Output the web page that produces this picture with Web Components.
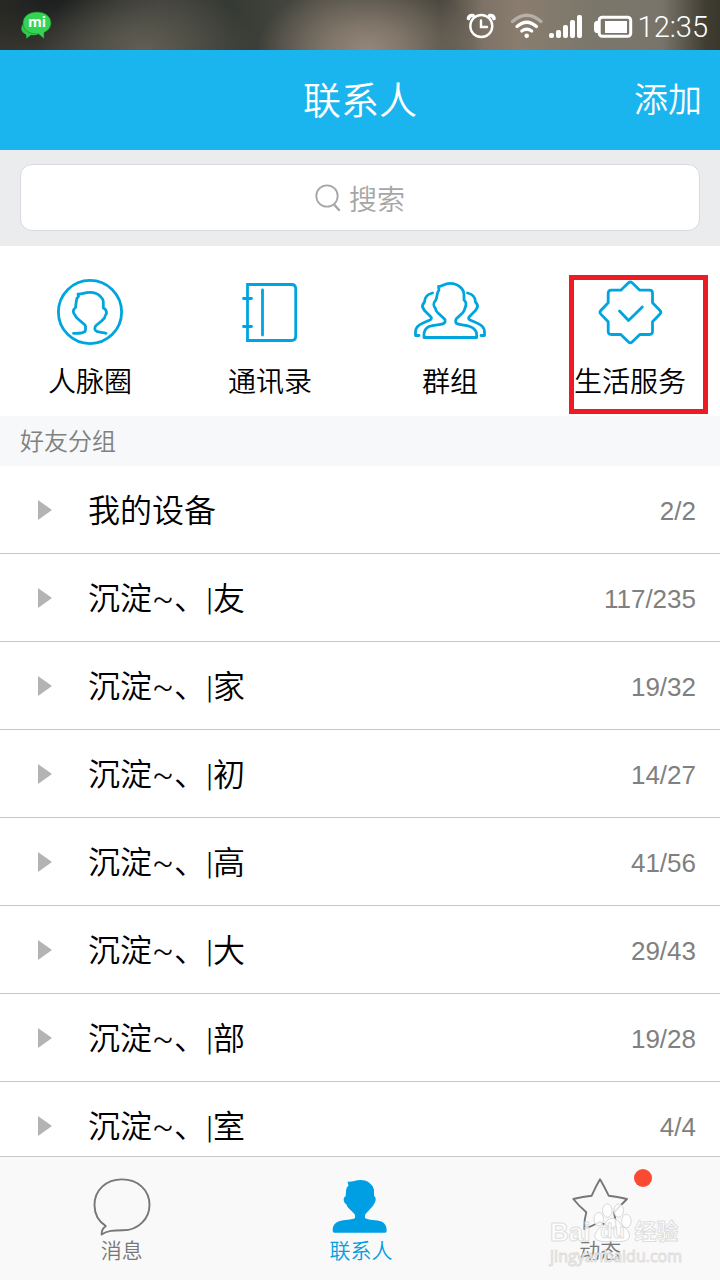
<!DOCTYPE html>
<html lang="zh-CN">
<head>
<meta charset="utf-8">
<meta name="viewport" content="width=device-width, initial-scale=1">
<title>联系人</title>
<style>
  body { margin: 0; font-family: "Noto Sans CJK SC", sans-serif; font-weight: 350; color: #000; background: #fff; }
</style>
</head>
<body>
<contacts-app></contacts-app>

<script>
function define(name, html) {
  const template = document.createElement('template');
  template.innerHTML = html;
  customElements.define(name, class extends HTMLElement {
    constructor() {
      super();
      this.attachShadow({ mode: 'open' }).append(template.content.cloneNode(true));
    }
  });
}

define('status-bar', `
<style>
  :host { display: flex; align-items: center; flex: none; height: 50px; padding: 0 12px 0 20px; color: #fff;
    background:
      radial-gradient(ellipse 110px 70px at 51% 100%, #94867a 0%, #8f8174cc 35%, #8f817400 100%),
      radial-gradient(ellipse 110px 70px at 20% 100%, #625f54 0%, #5c594e00 100%),
      radial-gradient(ellipse 110px 50px at 7% 0%, #1c1f1f 0%, #1c1f1f00 100%),
      linear-gradient(90deg, #34332b 0%, #3c3e38 18%, #363a34 32%, #4b4b43 45%, #47453c 61%, #7d7266 67%, #8a7d6f 72%, #7b776b 82%, #78746a 92%, #403d31 98%, #39362b 100%); }
  svg { display: block; flex: none; fill: none; stroke: #fff; }
  .space { flex: 1; }
  .alarm { margin-right: 14px; }
  .wifi { margin-right: 4px; }
  .signal { margin-right: 9px; }
  .battery { margin-right: 5px; }
  time { padding-top: 4px; font: 300 29px/30px Roboto, sans-serif; }
</style>
<svg width="32" height="30" viewBox="0 0 32 30" role="img" aria-label="米聊">
  <path d="M4 13C0 17 .5 22 6 24.5L6.500 28.500L11 25Q15 25.500 18 24.500Z" fill="#2fc94c" stroke="none"/>
  <path d="M17 2C25 2 31 6.500 31 13C31 17 28.500 20.500 24 22.500L24 28.500L18.500 24C9 24.500 3 20 3 13C3 6.500 9 2 17 2Z" fill="#34d453" stroke="#24762f" stroke-width=".6"/>
  <text x="17" y="17" text-anchor="middle" font-family="Open Sans" font-weight="700" font-size="14" fill="#fff" stroke="none">mi</text>
</svg>
<span class="space"></span>
<svg class="alarm" width="30" height="30" viewBox="0 0 30 30" stroke-width="2.400" stroke-linecap="round">
  <circle cx="15.300" cy="16" r="11"/><path d="M15 10.500V17H21"/>
  <path d="M2.500 8.500Q3 5 7 5.500M23.700 5.500Q27.500 5 28 8.500" stroke-width="3.600"/>
</svg>
<svg class="wifi" width="34" height="30" viewBox="0 0 34 30" stroke-width="3.200" stroke-linecap="round">
  <path d="M2.500 11.500Q16.700-1 31 11.500" opacity=".4"/>
  <path d="M7 16.500Q16.700 8 26.500 16.500M11.800 21Q16.700 17.500 21.700 21"/>
  <circle cx="16.700" cy="25.700" r="2.300" fill="#fff" stroke="none"/>
</svg>
<svg class="signal" width="36" height="30" viewBox="0 0 36 30" stroke="none">
  <g fill="#fff" stroke="none"><rect x="1" y="23" width="5" height="5" rx="2"/><rect x="8" y="20" width="5" height="8" rx="2"/><rect x="15" y="15" width="5" height="13" rx="2"/><rect x="22" y="10" width="5" height="18" rx="2"/><rect x="29" y="5" width="5" height="23" rx="2"/></g>
</svg>
<svg class="battery" width="40" height="30" viewBox="0 0 40 30">
  <rect x="6.200" y="7.300" width="31.500" height="19" rx="3" stroke-width="3"/>
  <path d="M5 11H3Q1 12 1 14V20Q1 22 3 23H5Z" fill="#fff" stroke="none"/>
  <rect x="12" y="11" width="22" height="12" fill="#fff" stroke="none"/>
</svg>
<time>12:35</time>
`);

define('title-bar', `
<style>
  :host { display: grid; grid-template-columns: 1fr auto 1fr; align-items: center; flex: none; height: 100px; padding: 0 18px 4px; box-sizing: border-box; background: #1ab4ee; color: #fff; }
  h1 { grid-column: 2; margin: 0; font-size: 38px; line-height: 48px; font-weight: inherit; }
  button { justify-self: end; border: 0; padding: 0; background: none; color: inherit; font: inherit; font-size: 34px; line-height: 48px; }
</style>
<h1><slot></slot></h1>
<button type="button"><slot name="action"></slot></button>
`);

define('search-box', `
<style>
  :host { display: block; flex: none; padding: 14px 20px 15px; background: #ebeced; }
  label { display: flex; align-items: center; justify-content: center; gap: 8px; height: 65px; border: 1px solid #d8dadd; border-radius: 12px; background: #fff; }
  svg { flex: none; }
  input { width: 56px; height: 40px; box-sizing: border-box; padding: 0; margin: 0; border: 0; outline: 0; background: none; font: inherit; font-size: 28px; line-height: 40px; }
  input::placeholder { color: #a6a6a6; opacity: 1; }
</style>
<label>
  <svg width="26" height="28" viewBox="0 0 26 28" fill="none" stroke="#a6a6a6" stroke-linecap="round"><circle cx="12" cy="12" r="10.700" stroke-width="1.800"/><path d="M19.500 21L24 26" stroke-width="2.400"/></svg>
  <input type="text" placeholder="搜索" aria-label="搜索">
</label>
`);

define('quick-link', `
<style>
  :host { position: relative; display: block; flex: 1; }
  a { display: flex; flex-direction: column; align-items: center; gap: 12px; padding: 30px 0 16px; color: inherit; text-decoration: none; font-size: 28px; line-height: 40px; white-space: nowrap; }
  ::slotted(svg) { display: block; width: 72px; height: 72px; }
  .mark { display: none; position: absolute; inset: 29px 12px 2px 29px; border: 5px solid #ed1c24; }
  :host([marked]) .mark { display: block; }
</style>
<a href="#"><slot name="icon"></slot><span><slot></slot></span></a>
<div class="mark"></div>
`);

define('quick-links', `
<style>
  :host { display: flex; flex: none; background: #fff; }
  svg { fill: none; stroke: #00a5e0; stroke-width: 2.800; stroke-linecap: round; stroke-linejoin: round; }
</style>
<quick-link>
  <svg slot="icon" viewBox="0 0 72 72"><circle cx="36" cy="36" r="31.600"/><path d="M19.500 57.300C26 57.500 31.500 57 31.500 54V50L30.500 48.500L24 43Q21.500 41 21 39Q19.500 38 19.300 35.500Q19.500 33 21.500 31.500L22.500 24Q22.700 22 24.500 20.500L24 18C28 18.500 30 16.300 36 16.300Q43 16.300 46.500 20.500Q49.300 23 49.300 26V32C51.500 33 52.800 35.500 52.300 38Q51 39 50.500 42L47.500 45L42 49.500Q40.800 50.500 40.800 53C41 56 45 56 52 57.300"/></svg>人脉圈
</quick-link>
<quick-link>
  <svg slot="icon" viewBox="0 0 72 72"><path d="M13.500 8.500H57.500Q61.700 8.500 61.700 13V60Q61.700 64.500 57.500 64.500H13.500Z" stroke-linejoin="miter"/><path d="M28.500 14V59M9.500 22.500H17.500M9.500 50.500H17.500"/></svg>通讯录
</quick-link>
<quick-link>
  <svg slot="icon" viewBox="0 0 72 72"><path d="M25 14L24.500 10.500C28 11 30 7.300 36 7.300C44 7.300 50 13 50 19V24C52.500 26 52.500 29 51 32Q50.500 35 48.500 37L42.500 42.500Q41.500 44 41.700 46C42 49.500 50 48 56 50.500Q62.700 53 62.700 59V61.500H10V59Q10 53 15 50.500C22 48 31 49.500 31 45.500V43.500L24 37Q21.500 35 21.500 32.500C19.500 30.500 19 27 21.500 24.500C24 20 22 18 25 14Z"/><path d="M18.500 17C12 18.500 10.500 22 10.500 26Q8 29 8.500 31L10.500 34.500L17 41Q18 43 16 44L9 47Q1.500 50 1.500 56V59.500H5M53.500 17C60 18.500 61.500 22 61.500 26Q64 29 63.500 31L61.500 34.500L55 41Q54 43 56 44L63 47Q70.500 50 70.500 56V59.500H67"/></svg>群组
</quick-link>
<quick-link marked>
  <svg slot="icon" viewBox="0 0 72 72"><path d="M34.500 6.800Q36.300 5.200 38.100 6.800L45.800 14.200H55.500Q58.500 14.200 58.500 17.200V26.800L66 34.500Q67.600 36.300 66 38.100L58.500 45.800V55.500Q58.500 58.500 55.500 58.500H45.800L38.100 66Q36.300 67.600 34.500 66L26.800 58.500H17.200Q14.200 58.500 14.200 55.500V45.800L6.800 38.100Q5.200 36.300 6.800 34.500L14.200 26.800V17.200Q14.200 14.200 17.200 14.200H26.800Z"/><path d="M25.500 35L34.500 44.500L48.300 31"/></svg>生活服务
</quick-link>
`);

define('group-row', `
<style>
  :host { display: block; border-bottom: 1px solid #c8c8c8; background: #fff; }
  button { display: flex; align-items: center; width: 100%; height: 87px; padding: 1px 24px 0 38px; border: 0; background: none; color: #000; text-align: left; font: 350 32px/48px Roboto, "Noto Sans CJK SC", sans-serif; }
  svg { flex: none; margin-right: 36px; }
  .name { flex: 1; padding-top: 2px; }
  .count { padding-top: 2px; font: 26px/48px "Liberation Sans", sans-serif; color: #808080; }
</style>
<button type="button" aria-expanded="false">
  <svg width="14" height="20" viewBox="0 0 14 20"><path d="M0 0L14 10L0 20Z" fill="#b3b3b3"/></svg>
  <span class="name"><slot></slot></span><span class="count"><slot name="count"></slot></span>
</button>
`);

define('group-list', `
<style>
  :host { display: flex; flex-direction: column; flex: 1; min-height: 0; }
  h2 { flex: none; margin: 0; padding: 6px 20px 8px; background: #f7f8fa; color: #808080; font-size: 24px; line-height: 36px; font-weight: inherit; }
  .rows { flex: 1; min-height: 0; overflow-y: auto; scrollbar-width: none; }
</style>
<h2>好友分组</h2>
<div class="rows"><slot></slot></div>
`);

define('tab-item', `
<style>
  :host { position: relative; display: block; flex: 1; color: #777; }
  :host([current]) { color: #009fe3; }
  a { display: flex; flex-direction: column; align-items: center; padding: 20px 0 19px; color: inherit; text-decoration: none; font-size: 21px; line-height: 24px; }
  ::slotted(svg) { display: block; width: 60px; height: 60px; }
  .dot { display: none; position: absolute; top: 12px; left: calc(50% + 34px); width: 18px; height: 18px; border-radius: 50%; background: #fa4b32; }
  :host([unread]) .dot { display: block; }
</style>
<a href="#"><slot name="icon"></slot><span><slot></slot></span></a>
<span class="dot"></span>
`);

define('water-mark', `
<style>
  :host { display: grid; justify-items: start; color: #fffc; -webkit-text-stroke: 1px #d6d6d6cc; pointer-events: none; }
  .brand { display: flex; align-items: center; font: 700 26px/32px "Liberation Sans", "Noto Sans CJK SC", sans-serif; }
  .paw { position: relative; width: 44px; height: 32px; text-align: center; font-size: 20px; line-height: 30px; }
  .paw svg { position: absolute; left: 0; bottom: 3px; }
  .paw span { position: relative; }
  .cn { font-size: 22px; }
  .site { font: 16px/16px "Open Sans", sans-serif; }
</style>
<div class="brand"><span>Bai</span><span class="paw"><svg width="44" height="44" viewBox="0 0 46 44" fill="#fffc" stroke="#d6d6d6"><ellipse cx="8" cy="18" rx="5" ry="7"/><ellipse cx="17" cy="9" rx="5" ry="7"/><ellipse cx="29" cy="9" rx="5" ry="7"/><ellipse cx="37" cy="20" rx="5" ry="7"/><path d="M22 17Q28 17 31 24Q42 30 40 37Q38 43 22 41Q6 43 4 37Q3 30 14 24Q17 17 22 17Z"/></svg><span>du</span></span><span class="cn">经验</span></div>
<div class="site">jingyanbaidu.com</div>
`);

define('tab-bar', `
<style>
  :host { position: relative; display: flex; flex: none; padding-left: 2px; border-top: 1px solid #c8c8c8; background: #f9f9f9; }
  svg { fill: none; stroke: currentColor; stroke-width: 1.900; stroke-linejoin: round; }
  water-mark { position: absolute; right: 38px; bottom: 16px; }
</style>
<tab-item><svg slot="icon" viewBox="0 0 60 60"><path d="M30 2.400C46 2.400 57.500 13 57.500 28C57.500 42 46 53.300 31 53.300C22 53.300 15 53.500 9.600 57.500L10 54Q11 51 13.800 49C6 44 2.500 37 2.500 28C2.500 13 14 2.400 30 2.400Z"/></svg>消息</tab-item>
<tab-item current><svg slot="icon" viewBox="0 0 60 60"><path d="M17.500 8.500L16.500 4.700C21 5.300 24 3 29.500 3C37 3 42.300 8 43 13V19C45.500 20 45 25 43 27Q42 29 40.500 30.500L34.500 37Q33.500 39 34 41C37 43.500 46 42.500 50.500 44.500C54 46 55.700 49 55.700 53.500Q55.700 55.700 54 55.700H3.500Q1.700 55.700 1.700 53.500C1.700 49 3.500 46 8 44.300C13 42.500 21 43 24 41Q24.500 39 23.500 37L17.500 31Q16 29.500 15.500 27.500C12.500 26 11.500 20.500 14.500 19.500C15.500 15 14 12 17.500 8.500Z" fill="currentColor" stroke="none"/></svg>联系人</tab-item>
<tab-item unread><svg slot="icon" viewBox="0 0 60 60"><path d="M30 2.300Q34 9 38.700 18.700Q47 19.500 57 22Q50 29 44 35.300Q46 43 46 53Q37 49 30 45Q22 49 14.300 52Q14 43 16.300 35.300Q9 29 3.300 22Q13 19.500 21.700 18.700Q26 9 30 2.300Z"/></svg>动态</tab-item>
<water-mark></water-mark>
`);

define('contacts-app', `
<style>
  :host { display: flex; flex-direction: column; height: 100vh; overflow: hidden; }
</style>
<status-bar></status-bar>
<title-bar>联系人<span slot="action">添加</span></title-bar>
<search-box></search-box>
<quick-links></quick-links>
<group-list>
  <group-row>我的设备<span slot="count">2/2</span></group-row>
  <group-row>沉淀~、|友<span slot="count">117/235</span></group-row>
  <group-row>沉淀~、|家<span slot="count">19/32</span></group-row>
  <group-row>沉淀~、|初<span slot="count">14/27</span></group-row>
  <group-row>沉淀~、|高<span slot="count">41/56</span></group-row>
  <group-row>沉淀~、|大<span slot="count">29/43</span></group-row>
  <group-row>沉淀~、|部<span slot="count">19/28</span></group-row>
  <group-row>沉淀~、|室<span slot="count">4/4</span></group-row>
</group-list>
<tab-bar></tab-bar>
`);
</script>
</body>
</html>
